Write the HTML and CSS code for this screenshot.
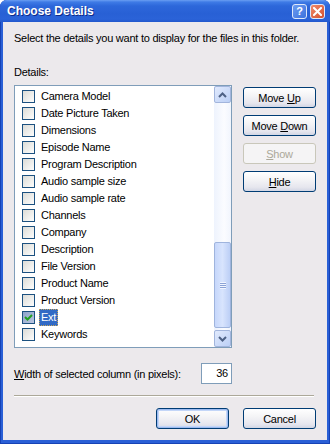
FILE: index.html
```html
<!DOCTYPE html>
<html>
<head>
    <title>Choose Details</title>
    <meta charset="utf-8">
    <link rel="stylesheet" href="styles.css">
</head>
<body>
    <div class="window">
        <div class="titlebar">
            <span class="title">Choose Details</span>
            <span class="tb-btn help">?</span>
            <span class="tb-btn close">
                <svg width="9" height="9" viewBox="0 0 9 9"><path d="M1 1 L8 8 M8 1 L1 8" stroke="#fff" stroke-width="2" stroke-linecap="square"/></svg>
            </span>
        </div>
        <div class="client">
            <p class="intro">Select the details you want to display for the files in this folder.</p>
            <p class="label">Details:</p>
            <div class="main">
                <div class="listbox">
                    <ul class="items">
                        <li><span class="cb"></span><span class="txt">Camera Model</span></li>
                        <li><span class="cb"></span><span class="txt">Date Picture Taken</span></li>
                        <li><span class="cb"></span><span class="txt">Dimensions</span></li>
                        <li><span class="cb"></span><span class="txt">Episode Name</span></li>
                        <li><span class="cb"></span><span class="txt">Program Description</span></li>
                        <li><span class="cb"></span><span class="txt">Audio sample size</span></li>
                        <li><span class="cb"></span><span class="txt">Audio sample rate</span></li>
                        <li><span class="cb"></span><span class="txt">Channels</span></li>
                        <li><span class="cb"></span><span class="txt">Company</span></li>
                        <li><span class="cb"></span><span class="txt">Description</span></li>
                        <li><span class="cb"></span><span class="txt">File Version</span></li>
                        <li><span class="cb"></span><span class="txt">Product Name</span></li>
                        <li><span class="cb"></span><span class="txt">Product Version</span></li>
                        <li class="selected"><span class="cb checked"><svg width="9" height="9" viewBox="0 0 9 9"><path d="M1 4 L3.5 6.5 L8 2" fill="none" stroke="#21a121" stroke-width="2"/></svg></span><span class="txt">Ext</span></li>
                        <li><span class="cb"></span><span class="txt">Keywords</span></li>
                    </ul>
                    <div class="scrollbar">
                        <div class="sb-btn">
                            <svg width="9" height="6" viewBox="0 0 9 6"><path d="M1 5 L4.5 1.5 L8 5" fill="none" stroke="#4d6185" stroke-width="2"/></svg>
                        </div>
                        <div class="sb-track"></div>
                        <div class="sb-thumb">
                            <span class="grip"></span>
                        </div>
                        <div class="sb-btn down">
                            <svg width="9" height="6" viewBox="0 0 9 6"><path d="M1 1 L4.5 4.5 L8 1" fill="none" stroke="#4d6185" stroke-width="2"/></svg>
                        </div>
                    </div>
                </div>
                <div class="side-buttons">
                    <button class="btn">Move <u>U</u>p</button>
                    <button class="btn">Move <u>D</u>own</button>
                    <button class="btn disabled"><u>S</u>how</button>
                    <button class="btn"><u>H</u>ide</button>
                </div>
            </div>
            <div class="width-row">
                <span class="width-label"><u>W</u>idth of selected column (in pixels):</span>
                <span class="num-box">36</span>
            </div>
            <div class="separator"></div>
            <div class="footer">
                <button class="btn default">OK</button>
                <button class="btn">Cancel</button>
            </div>
        </div>
    </div>
</body>
</html>
```

FILE: styles.css
```css
body {
    margin: 0;
    background-color: #fff;
    font-family: "Liberation Sans", Arial, sans-serif;
    font-size: 11px;
    letter-spacing: -0.25px;
    color: #000;
}
.window {
    width: 330px;
    height: 444px;
    box-sizing: border-box;
    padding: 0 3px 4px 3px;
    display: flex;
    flex-direction: column;
    background-color: #2a5fd6;
    border-radius: 7px 7px 0 0;
    box-shadow: inset 1px 0 #1642b5, inset -1px 0 #1642b5, inset 0 -1px #1642b5;
}
.titlebar {
    height: 22px;
    margin: 0 -3px;
    padding: 0 5px 0 7px;
    display: flex;
    align-items: center;
    border-radius: 7px 7px 0 0;
    background: linear-gradient(#6a9ef2 0, #3f7be6 2px, #2d67da 6px, #2860d5 14px, #2b63d8 19px, #2257cd 22px);
}
.title {
    flex: 1;
    color: #fff;
    font-weight: bold;
    font-size: 12px;
    letter-spacing: 0;
    text-shadow: 1px 1px #0f2a88;
}
.tb-btn {
    width: 13px;
    height: 13px;
    margin-left: 3px;
    display: flex;
    align-items: center;
    justify-content: center;
    border: 1px solid #dfe8fa;
    border-radius: 3px;
    color: #fff;
    font-weight: bold;
    font-size: 11px;
}
.help {
    background: linear-gradient(135deg, #6c9cf0, #3d72de);
}
.close {
    background: linear-gradient(135deg, #ef8a6a, #d4512f);
}
.client {
    flex: 1;
    padding: 0 11px;
    background-color: #ece9ec;
}
.intro {
    margin: 10px 0 0;
    line-height: 13px;
    white-space: nowrap;
}
.label {
    margin: 21px 0 0;
    line-height: 13px;
}
.main {
    margin-top: 6px;
    display: flex;
    gap: 11px;
}
.listbox {
    width: 218px;
    height: 263px;
    box-sizing: border-box;
    display: flex;
    border: 1px solid #7f9db9;
    background-color: #fff;
}
.items {
    flex: 1;
    margin: 0;
    padding: 2px 0 0 7px;
    list-style: none;
}
.items li {
    height: 17px;
    display: flex;
    align-items: center;
}
.cb {
    width: 11px;
    height: 11px;
    display: flex;
    align-items: center;
    justify-content: center;
    border: 1px solid #1c5180;
    background: linear-gradient(135deg, #dcdcd7, #fdfdfc);
}
.cb.checked {
    background: linear-gradient(135deg, #8fa3ca, #b9c6e0);
}
.txt {
    margin-left: 4px;
    padding: 0 1px;
    line-height: 15px;
    border: 1px dotted transparent;
}
.selected .txt {
    background-color: #316ac5;
    color: #fff;
    border-color: #c8a65a;
}
.scrollbar {
    width: 17px;
    display: flex;
    flex-direction: column;
    background: linear-gradient(90deg, #eef3fd, #fbfcff 60%, #f1f5fd);
}
.sb-btn {
    height: 15px;
    display: flex;
    align-items: center;
    justify-content: center;
    border: 1px solid #a2b5dc;
    border-radius: 2px;
    background: linear-gradient(135deg, #e1eafd, #bcd0f6);
}
.sb-track {
    flex: 1;
}
.sb-thumb {
    height: 84px;
    margin-bottom: 2px;
    display: flex;
    align-items: center;
    justify-content: center;
    border: 1px solid #9fb4dd;
    border-radius: 2px;
    background: linear-gradient(90deg, #c6d7fb, #d8e4fd 50%, #bccff6);
}
.grip {
    width: 6px;
    height: 7px;
    background: repeating-linear-gradient(#f2f6ff 0, #f2f6ff 1px, #8ca3d6 1px, #8ca3d6 2px);
}
.side-buttons {
    margin-top: 2px;
    display: flex;
    flex-direction: column;
    gap: 7px;
}
.btn {
    width: 73px;
    height: 21px;
    padding: 0;
    font-family: "Liberation Sans", Arial, sans-serif;
    font-size: 11px;
    letter-spacing: -0.25px;
    color: #000;
    border: 1px solid #003c74;
    border-radius: 3px;
    background: linear-gradient(#ffffff 0, #f4f4f6 40%, #e6e6ee 80%, #d2d6e4 100%);
}
.btn.disabled {
    color: #aca899;
    border-color: #c9c7ba;
    background: #f5f4f5;
}
.btn.default {
    box-shadow: inset 0 0 0 1px #9dbbf0, inset 0 0 0 2px #c3d6f8;
}
.width-row {
    margin-top: 15px;
    display: flex;
    align-items: center;
    justify-content: space-between;
    width: 218px;
}
.num-box {
    width: 31px;
    height: 21px;
    box-sizing: border-box;
    padding-right: 3px;
    line-height: 19px;
    text-align: right;
    border: 1px solid #7f9db9;
    background-color: #fff;
}
.separator {
    margin-top: 11px;
    width: 300px;
    border-top: 1px solid #aca899;
    border-bottom: 1px solid #fff;
}
.footer {
    margin-top: 11px;
    display: flex;
    justify-content: flex-end;
    gap: 14px;
}
```
